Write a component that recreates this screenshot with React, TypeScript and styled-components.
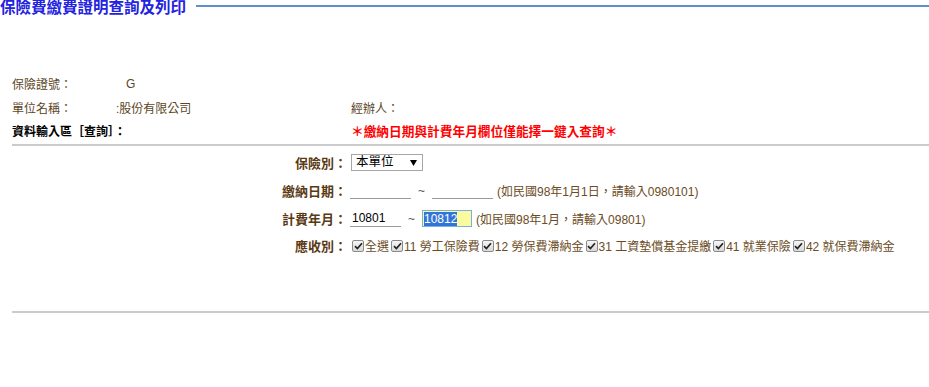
import React, { useEffect, useRef } from "react";
import styled, { createGlobalStyle } from "styled-components";

const GlobalStyle = createGlobalStyle`
  html, body { margin: 0; padding: 0; background: #ffffff; }
  body {
    font-family: "Liberation Sans", Arial, "Noto Sans CJK TC", sans-serif;
    font-size: 12px;
    color: #5e4b2b;
  }
  * { box-sizing: border-box; }
`;

const Page = styled.div`
  width: 929px;
  overflow: hidden;
`;

const Header = styled.div`
  display: flex;
  align-items: flex-start;
  height: 16px;
  margin-top: -1px;
`;

const Title = styled.h1`
  margin: 0;
  font-size: 15.5px;
  line-height: 17px;
  font-weight: bold;
  color: #2323e0;
  white-space: nowrap;
`;

const TitleRule = styled.div`
  flex: 1;
  margin-left: 10px;
  margin-top: 6px;
  border-top: 2px solid #5b93c9;
`;

const Info = styled.div`
  margin-top: 57px;
  padding-left: 12px;
  display: grid;
  grid-template-columns: 104px 235px 1fr;
  grid-auto-rows: 23.5px;
  align-items: center;
  color: #5b4626;
  font-size: 12px;
`;

const InfoCell = styled.div<{ $indent?: number }>`
  padding-left: ${(p) => p.$indent ?? 0}px;
  white-space: nowrap;
`;

const Strong = styled.div`
  font-weight: bold;
  color: #000;
  white-space: nowrap;
  font-size: 12px;
`;

const Warning = styled.div`
  font-weight: bold;
  color: #ff0000;
  font-size: 12.7px;
  white-space: nowrap;
`;

const Rule = styled.div<{ $top: number }>`
  margin: ${(p) => p.$top}px 0 0 12px;
  border-top: 2px solid #cbcbcb;
`;

const Form = styled.div`
  padding-top: 3px;
  display: grid;
  grid-template-columns: 347px 1fr;
  grid-template-rows: 28px 28px 28px 26px;
  column-gap: 3px;
  align-items: center;
`;

const Label = styled.div`
  text-align: right;
  font-weight: bold;
  font-size: 13px;
  color: #5a3a14;
  white-space: nowrap;
`;

const Control = styled.div`
  display: flex;
  align-items: center;
  white-space: nowrap;
  color: #6b4c1e;
  font-size: 12px;
`;

const SelectWrap = styled.div`
  position: relative;
  width: 72px;
  height: 17px;
  margin-left: 1px;
`;

const Select = styled.select`
  appearance: none;
  -webkit-appearance: none;
  width: 100%;
  height: 100%;
  border: 1px solid #a6a6a6;
  border-radius: 0;
  background: #fff;
  padding: 0 0 0 4px;
  font-family: inherit;
  font-size: 12.5px;
  color: #000;
  line-height: 15px;
`;

const Arrow = styled.svg`
  position: absolute;
  right: 6px;
  top: 6px;
  pointer-events: none;
`;

const LineInput = styled.input<{ $w: number; $active?: boolean }>`
  width: ${(p) => p.$w}px;
  height: 17px;
  border: none;
  border-bottom: 1px solid #9a9a9a;
  background: transparent;
  padding: 0 2px;
  font-family: inherit;
  font-size: 12px;
  color: #000;
  outline: none;

  ${(p) =>
    p.$active &&
    `
    border: 1px solid #7aaee6;
    background: #fafaa0;
    padding: 0 0 0 1px;
    &::selection { background: #3375d7; color: #ffffff; }
  `}
`;

const Tilde = styled.span<{ $l: number; $r: number }>`
  margin: 0 ${(p) => p.$r}px 0 ${(p) => p.$l}px;
  color: #555;
`;

const Hint = styled.span`
  margin-left: 4px;
`;

const Checks = styled.div`
  display: flex;
  align-items: center;
  gap: 2px;
  margin-left: 2px;
  white-space: nowrap;
  color: #6b4c1e;
  font-size: 12px;
`;

const CheckItem = styled.label`
  display: flex;
  align-items: center;
  gap: 1px;
`;

const Box = styled.span`
  display: inline-flex;
  align-items: center;
  justify-content: center;
  width: 12px;
  height: 12px;
  border: 1px solid #8a8a8a;
  border-radius: 2px;
  background: linear-gradient(#f6f6f6, #d9d9d9);
`;

const Check = ({ text }: { text: string }) => (
  <CheckItem>
    <Box>
      <svg width="9" height="8" viewBox="0 0 9 8">
        <path d="M1 4.2 L3.4 6.5 L8 1.2" fill="none" stroke="#222" strokeWidth="1.7" />
      </svg>
    </Box>
    <span>{text}</span>
  </CheckItem>
);

export default function App() {
  const ref = useRef<HTMLInputElement>(null);
  useEffect(() => {
    const el = ref.current;
    if (el) {
      el.focus();
      el.setSelectionRange(0, el.value.length);
    }
  }, []);

  return (
    <Page>
      <GlobalStyle />
      <Header>
        <Title>保險費繳費證明查詢及列印</Title>
        <TitleRule />
      </Header>

      <Info>
        <InfoCell>保險證號：</InfoCell>
        <InfoCell $indent={10}>G</InfoCell>
        <InfoCell />
        <InfoCell>單位名稱：</InfoCell>
        <InfoCell>:股份有限公司</InfoCell>
        <InfoCell>經辦人：</InfoCell>
        <Strong>資料輸入區［查詢］：</Strong>
        <InfoCell />
        <Warning>＊繳納日期與計費年月欄位僅能擇一鍵入查詢＊</Warning>
      </Info>
      <Rule $top={1} />

      <Form>
        <Label>保險別：</Label>
        <Control>
          <SelectWrap>
            <Select defaultValue="本單位">
              <option>本單位</option>
            </Select>
            <Arrow width="7" height="6" viewBox="0 0 7 6">
              <path d="M0 0 H7 L3.5 6 Z" fill="#000" />
            </Arrow>
          </SelectWrap>
        </Control>

        <Label>繳納日期：</Label>
        <Control>
          <LineInput $w={61} defaultValue="" />
          <Tilde $l={7} $r={7}>~</Tilde>
          <LineInput $w={61} defaultValue="" />
          <Hint>(如民國98年1月1日，請輸入0980101)</Hint>
        </Control>

        <Label>計費年月：</Label>
        <Control>
          <LineInput $w={51} defaultValue="10801" />
          <Tilde $l={7} $r={7}>~</Tilde>
          <LineInput ref={ref} $w={50} $active defaultValue="10812" />
          <Hint>(如民國98年1月，請輸入09801)</Hint>
        </Control>

        <Label>應收別：</Label>
        <Checks>
          <Check text="全選" />
          <Check text="11 勞工保險費" />
          <Check text="12 勞保費滯納金" />
          <Check text="31 工資墊償基金提繳" />
          <Check text="41 就業保險" />
          <Check text="42 就保費滯納金" />
        </Checks>
      </Form>
      <Rule $top={52} />
    </Page>
  );
}
